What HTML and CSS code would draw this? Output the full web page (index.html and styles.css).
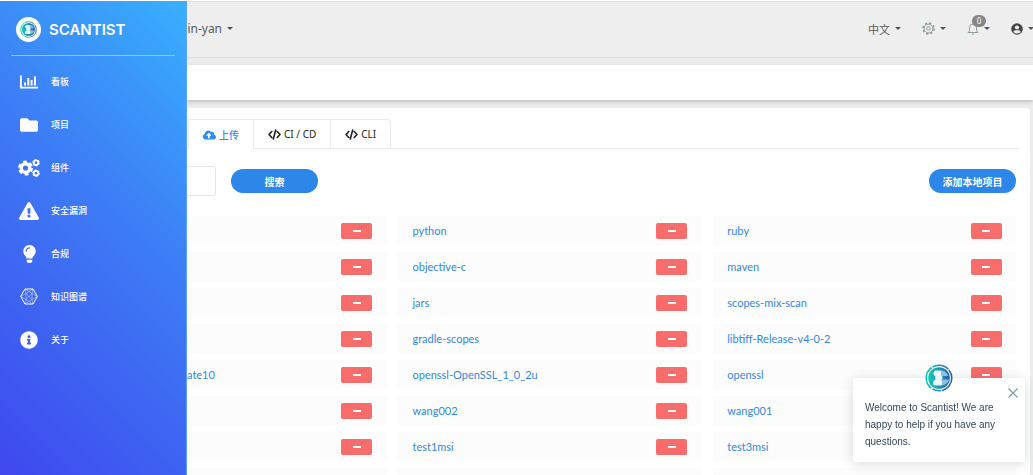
FILE: index.html
```html
<!DOCTYPE html>
<html lang="zh-CN">
<head>
<meta charset="utf-8">
<title>Scantist</title>
<link rel="stylesheet" href="styles.css">
</head>
<body>
<svg class="defs" width="0" height="0" aria-hidden="true">
  <defs>
    <linearGradient id="teal" x1="0" y1="0" x2="1" y2="0"><stop offset="0" stop-color="#12cbb8"/><stop offset="1" stop-color="#2a62ad"/></linearGradient>
    <symbol id="logo" viewBox="0 0 28 28">
      <circle cx="14" cy="14" r="14" fill="#fff"/>
      <circle cx="14" cy="14" r="12.8" fill="none" stroke="url(#teal)" stroke-width="1.600" stroke-dasharray="17 1 9 1.200 24 1"/>
      <circle cx="14" cy="14" r="10.800" fill="url(#teal)"/>
      <rect x="8.500" y="6.500" width="9" height="5.500" rx="2.500" fill="#eafafa"/>
      <path d="M16 6.500h1q5 1 6 5.500h-7z" fill="#8cc0e2"/>
      <rect x="10" y="11.500" width="7.500" height="4.500" rx="1.500" fill="#eafafa"/>
      <rect x="8" y="16" width="10" height="5.500" rx="2.500" fill="#eafafa"/>
      <path d="M17 15.500h7q-1.500 5-7 6z" fill="#8cc0e2"/>
    </symbol>
    <symbol id="code" viewBox="0 0 13 11"><path d="M3.800 2.500L1 5.500l2.800 3M9.200 2.500l2.800 3-2.800 3M7.700 1L5.300 10" fill="none" stroke="currentColor" stroke-width="1.600" stroke-linecap="round" stroke-linejoin="round"/></symbol>
  </defs>
</svg>
<div class="page">
  <header class="topbar">
    <button class="menu org" type="button">bin-yan<span class="caret"></span></button>
    <div class="tools">
      <button class="menu" type="button">中文<span class="caret"></span></button>
      <button class="menu" type="button" aria-label="设置">
        <svg width="13" height="13" viewBox="0 0 13 13" fill="none" stroke="#8e9a9c"><circle cx="6.500" cy="6.500" r="4.400" stroke-width="1"/><circle cx="6.500" cy="6.500" r="5.500" stroke-width="1.500" stroke-dasharray="2.200 2.119"/><circle cx="6.500" cy="6.500" r="1.700" stroke-width="1"/></svg><span class="caret"></span>
      </button>
      <button class="menu bell" type="button" aria-label="通知">
        <svg width="12" height="13" viewBox="0 0 12 13" fill="none" stroke="#8e9a9c"><path d="M1 10.500h10L9.500 8.800V5.500a3.500 3.500 0 0 0-7 0v3.300zM5 12.200h2M6 .500V2"/></svg><span class="badge">0</span><span class="caret"></span>
      </button>
      <button class="menu" type="button" aria-label="用户">
        <svg width="12" height="12" viewBox="0 0 12 12"><circle cx="6" cy="6" r="5.800" fill="#444"/><circle cx="6" cy="4.500" r="2.100" fill="#eee"/><path d="M2.300 9q.3-1.700 2.200-1.700h3q1.900 0 2.200 1.700Q8.300 10.500 6 10.500T2.300 9z" fill="#eee"/></svg><span class="caret"></span>
      </button>
    </div>
  </header>
  <div class="crumbs"></div>
  <main class="card">
    <nav class="tabs">
      <a class="tab active" href="#"><svg width="13" height="10" viewBox="0 32 640 448" fill="currentColor"><path d="M537.600 226.600c4.100-10.700 6.400-22.400 6.400-34.600 0-53-43-96-96-96-19.700 0-38.100 6-53.300 16.200C367 64.200 315.300 32 256 32c-88.400 0-160 71.600-160 160 0 2.700.1 5.400.2 8.100C40.200 219.800 0 273.200 0 336c0 79.500 64.500 144 144 144h368c70.700 0 128-57.300 128-128 0-61.900-44-113.600-102.400-125.400zM393.400 288H328v112c0 8.800-7.200 16-16 16h-48c-8.800 0-16-7.200-16-16V288h-65.400c-14.300 0-21.400-17.200-11.300-27.300l105.400-105.400c6.200-6.200 16.400-6.200 22.600 0l105.400 105.400c10.100 10.100 2.900 27.300-11.300 27.300z"/></svg>上传</a>
      <a class="tab" href="#"><svg width="13" height="11"><use href="#code"/></svg>CI / CD</a>
      <a class="tab" href="#"><svg width="13" height="11"><use href="#code"/></svg>CLI</a>
    </nav>
    <form class="filters">
      <input class="query" type="text" aria-label="搜索项目">
      <button class="pill" type="button">搜索</button>
      <button class="pill add" type="button">添加本地项目</button>
    </form>
    <div class="grid">
      <div class="item"><button class="remove" type="button" aria-label="删除"></button></div>
      <div class="item"><a href="#">python</a><button class="remove" type="button" aria-label="删除"></button></div>
      <div class="item"><a href="#">ruby</a><button class="remove" type="button" aria-label="删除"></button></div>
      <div class="item"><button class="remove" type="button" aria-label="删除"></button></div>
      <div class="item"><a href="#">objective-c</a><button class="remove" type="button" aria-label="删除"></button></div>
      <div class="item"><a href="#">maven</a><button class="remove" type="button" aria-label="删除"></button></div>
      <div class="item"><button class="remove" type="button" aria-label="删除"></button></div>
      <div class="item"><a href="#">jars</a><button class="remove" type="button" aria-label="删除"></button></div>
      <div class="item"><a href="#">scopes-mix-scan</a><button class="remove" type="button" aria-label="删除"></button></div>
      <div class="item"><button class="remove" type="button" aria-label="删除"></button></div>
      <div class="item"><a href="#">gradle-scopes</a><button class="remove" type="button" aria-label="删除"></button></div>
      <div class="item"><a href="#">libtiff-Release-v4-0-2</a><button class="remove" type="button" aria-label="删除"></button></div>
      <div class="item"><a href="#">ate10</a><button class="remove" type="button" aria-label="删除"></button></div>
      <div class="item"><a href="#">openssl-OpenSSL_1_0_2u</a><button class="remove" type="button" aria-label="删除"></button></div>
      <div class="item"><a href="#">openssl</a><button class="remove" type="button" aria-label="删除"></button></div>
      <div class="item"><button class="remove" type="button" aria-label="删除"></button></div>
      <div class="item"><a href="#">wang002</a><button class="remove" type="button" aria-label="删除"></button></div>
      <div class="item"><a href="#">wang001</a><button class="remove" type="button" aria-label="删除"></button></div>
      <div class="item"><button class="remove" type="button" aria-label="删除"></button></div>
      <div class="item"><a href="#">test1msi</a><button class="remove" type="button" aria-label="删除"></button></div>
      <div class="item"><a href="#">test3msi</a><button class="remove" type="button" aria-label="删除"></button></div>
      <div class="item"></div><div class="item"></div><div class="item"></div>
    </div>
  </main>
</div>

<aside class="sidebar">
  <a class="brand" href="#">
    <span class="disc"><svg width="17" height="17"><use href="#logo"/></svg></span>SCANTIST
  </a>
  <nav class="links">
    <a href="#"><svg width="18" height="14" viewBox="0 0 18 14" fill="currentColor"><path d="M0 .500h1.800v11.300H18v1.700H0zM4 7.500h2V10.500H4zM7.300 3h2v7.500h-2zM10.600 5h2v5.500h-2zM14 1.500h2v9h-2z"/></svg>看板</a>
    <a href="#"><svg width="18" height="16" viewBox="0 32 512 448" fill="currentColor"><path d="M464 128H272l-64-64H48C21.490 64 0 85.490 0 112v288c0 26.510 21.490 48 48 48h416c26.510 0 48-21.490 48-48V176c0-26.510-21.490-48-48-48z"/></svg>项目</a>
    <a href="#"><svg width="22" height="18" viewBox="0 0 22 18" fill="none" stroke="currentColor"><circle cx="7.500" cy="9" r="4.300" stroke-width="3.400"/><circle cx="7.500" cy="9" r="6.400" stroke-width="2.200" stroke-dasharray="3.900 2.802"/><circle cx="18" cy="3.700" r="2.300" stroke-width="1.900"/><circle cx="18" cy="3.700" r="3.300" stroke-width="1" stroke-dasharray="1.800 1.656"/><circle cx="18" cy="14.200" r="2.300" stroke-width="1.900"/><circle cx="18" cy="14.200" r="3.300" stroke-width="1" stroke-dasharray="1.800 1.656"/></svg>组件</a>
    <a href="#"><svg width="20" height="18" viewBox="0 0 576 512" fill="currentColor"><path d="M569.517 440.013C587.975 472.007 564.806 512 527.940 512H48.054c-36.937 0-59.999-40.055-41.577-71.987L246.423 23.985c18.467-32.009 64.720-31.951 83.154 0l239.940 416.028zM288 354c-25.405 0-46 20.595-46 46s20.595 46 46 46 46-20.595 46-46-20.595-46-46-46zm-43.673-165.346l7.418 136c.347 6.364 5.609 11.346 11.982 11.346h48.546c6.373 0 11.635-4.982 11.982-11.346l7.418-136c.375-6.874-5.098-12.654-11.982-12.654h-63.383c-6.884 0-12.356 5.780-11.981 12.654z"/></svg>安全漏洞</a>
    <a href="#"><svg width="13" height="18" viewBox="0 0 352 512" fill="currentColor"><path d="M96.060 454.350c.01 6.290 1.870 12.450 5.360 17.690l17.090 25.690a31.990 31.990 0 0 0 26.640 14.280h61.710a31.990 31.990 0 0 0 26.640-14.280l17.090-25.690a31.989 31.989 0 0 0 5.360-17.690l.04-38.350H96.010l.05 38.350zM0 176c0 44.370 16.450 84.850 43.560 115.780 16.520 18.850 42.360 58.230 52.210 91.450.04.26.07.52.11.78h160.240c.04-.26.07-.51.11-.78 9.850-33.220 35.690-72.600 52.210-91.450C335.550 260.850 352 220.370 352 176 352 78.610 272.910-.3 175.450 0 73.440.31 0 82.970 0 176zm176-80c-44.110 0-80 35.890-80 80 0 8.840-7.160 16-16 16s-16-7.160-16-16c0-61.760 50.240-112 112-112 8.840 0 16 7.160 16 16s-7.160 16-16 16z"/></svg>合规</a>
    <a href="#"><svg width="18" height="17" viewBox="0 0 18 17" fill="none" stroke="currentColor"><path d="M5 1h8l4.300 7.500L13 16H5L.7 8.500z" stroke-width="1"/><path d="M5 1l1 4.500L.7 8.500 6 11.500 5 16l4-2.500 4 2.500-1-4.500 5.300-3L12 5.500 13 1 9 3.500zM6 5.500l6 6M12 5.500l-6 6M9 3.500L6 5.500v6l3 2 3-2v-6z" stroke-width=".5" opacity=".8"/></svg>知识图谱</a>
    <a href="#"><svg width="18" height="18" viewBox="0 0 512 512" fill="currentColor"><path d="M256 8C119.043 8 8 119.083 8 256c0 136.997 111.043 248 248 248s248-111.003 248-248C504 119.083 392.957 8 256 8zm0 110c23.196 0 42 18.804 42 42s-18.804 42-42 42-42-18.804-42-42 18.804-42 42-42zm56 254c0 6.627-5.373 12-12 12h-88c-6.627 0-12-5.373-12-12v-24c0-6.627 5.373-12 12-12h12v-64h-12c-6.627 0-12-5.373-12-12v-24c0-6.627 5.373-12 12-12h64c6.627 0 12 5.373 12 12v100h12c6.627 0 12 5.373 12 12v24z"/></svg>关于</a>
  </nav>
</aside>

<section class="chat" aria-label="Scantist">
  <svg class="avatar" width="28" height="28"><use href="#logo"/></svg>
  <button class="close" type="button" aria-label="Close"><svg width="10" height="10" viewBox="0 0 10 10" fill="none" stroke="#7c98b6" stroke-width="1.200"><path d="M.500.500l9 9M9.500.500l-9 9"/></svg></button>
  <p>Welcome to Scantist! We are happy to help if you have any questions.</p>
</section>
</body>
</html>
```
FILE: styles.css
```css
* { box-sizing: border-box; }
body {
  margin: 0;
  font-family: "Noto Sans", "Noto Sans CJK SC", sans-serif;
  font-size: 10px;
  background: #ececec;
}
a { text-decoration: none; color: inherit; }
button { border: 0; padding: 0; background: none; font: inherit; color: inherit; cursor: pointer; }
svg { display: block; flex: none; }
.defs { position: absolute; }

.page {
  height: 100vh;
  overflow: hidden;
  padding-left: 187px;
  border-top: 1px solid #fff;
}
.topbar {
  display: flex;
  align-items: center;
  justify-content: space-between;
  height: 57px;
  padding-bottom: 2px;
  background: #eee;
  border-top: 1px solid #ddd;
  border-bottom: 1px solid #ddd;
  color: #5a5a5a;
}
.menu { display: flex; align-items: center; gap: 5px; font-size: 11px; white-space: nowrap; }
.org { margin-left: -7px; font-size: 12px; }
.caret { border: 3px solid transparent; border-top-color: #555; border-bottom: 0; }
.tools { display: flex; gap: 21px; }
.tools .menu:last-child { margin-right: -1px; }
.bell { position: relative; }
.badge {
  position: absolute;
  left: 5px;
  top: -6px;
  width: 14px;
  height: 12px;
  border-radius: 6px;
  background: #85858b;
  color: #fff;
  font-size: 8px;
  line-height: 12px;
  text-align: center;
}

.crumbs { height: 35px; margin-top: 7px; background: #fff; box-shadow: 0 2px 4px #00000030; }
.card {
  margin: 8px 3px 0 0;
  padding: 11px 14px 0 0;
  border-radius: 0 4px 0 0;
  background: #fff;
}
.tabs { display: flex; margin-right: -4px; border-bottom: 1px solid #e9ecef; }
.tab {
  display: flex;
  align-items: center;
  gap: 3px;
  height: 29px;
  padding: 0 14px;
  border: 1px solid #e9ecef;
  border-width: 1px 1px 0 0;
  color: #222;
}
.tab:last-child { border-top-right-radius: 3px; }
.tab.active {
  margin: 0 0 -1px 1px;
  height: 30px;
  border-left-width: 1px;
  background: #fff;
  color: #2f8df0;
  font-weight: 500;
}
.filters { display: flex; align-items: center; margin-top: 17px; }
.query { width: 29px; height: 30px; border: 1px solid #e4e7ea; border-left: 0; border-radius: 0 3px 3px 0; }
.pill {
  width: 87px;
  height: 24px;
  margin-left: 15px;
  border-radius: 12px;
  background: #2c87e8;
  color: #fff;
  font-weight: 700;
}
.add { margin-left: auto; }
.grid {
  display: grid;
  grid-template-columns: 199fr 302fr 302fr;
  gap: 7px 12px;
  margin-top: 20px;
  font-family: Lato, "Noto Sans CJK SC", sans-serif;
  font-size: 11px;
}
.item {
  display: flex;
  align-items: center;
  justify-content: space-between;
  height: 29px;
  padding: 0 14px;
  background: #fcfcfc;
  color: #3388e2;
}
.item:nth-child(3n + 1) { padding-left: 0; }
.remove {
  display: flex;
  align-items: center;
  justify-content: center;
  width: 31px;
  height: 16px;
  margin-left: auto;
  border-radius: 2px;
  background: #f86c6b;
}
.remove::before { content: ""; width: 8px; height: 2px; margin-top: 1px; background: #fff; }

.sidebar {
  position: fixed;
  top: 1px;
  bottom: 0;
  left: 0;
  width: 187px;
  padding: 0 11px;
  border-right: 1px solid #5aa5fa;
  background: linear-gradient(45deg, #3f48ee, #3d7ff6 60%, #38b0fe);
  color: #fff;
}
.brand {
  display: flex;
  align-items: center;
  gap: 8px;
  height: 55px;
  padding: 2px 5px 0;
  border-bottom: 1px solid #8cc4fc;
  font-family: Inter, sans-serif;
  font-size: 15px;
  font-weight: 600;
}
.disc { display: grid; place-items: center; width: 25px; height: 25px; border-radius: 50%; background: #fff; }
.links { padding-top: 4px; }
.links a {
  display: grid;
  grid-template-columns: 36px 1fr;
  column-gap: 4px;
  align-items: center;
  height: 43px;
  font-size: 9px;
  font-weight: 500;
}
.links svg { justify-self: center; }

.chat {
  position: fixed;
  right: 8px;
  bottom: 13px;
  width: 172px;
  padding: 21px 24px 12px 12px;
  border-radius: 3px;
  background: #fff;
  box-shadow: 0 2px 12px #2d3e5030;
  color: #33475b;
  font-family: "Liberation Sans", Arial, sans-serif;
  font-size: 10px;
  line-height: 17px;
}
.chat p { margin: 0; }
.avatar { position: absolute; left: 72px; top: -14px; }
.close { position: absolute; right: 7px; top: 10px; }
```
